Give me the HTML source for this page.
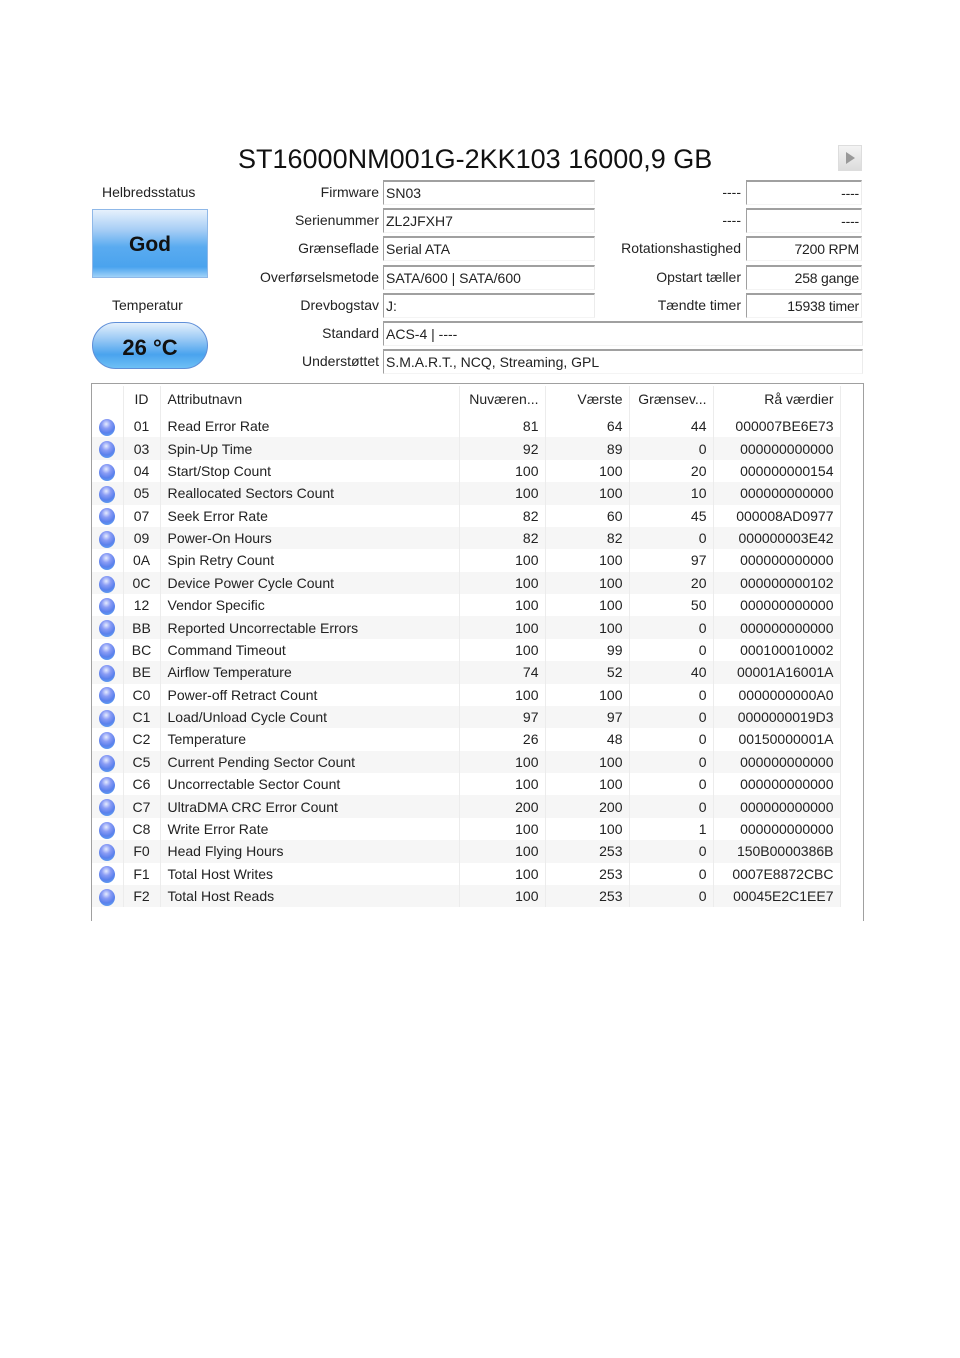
<!DOCTYPE html>
<html><head><meta charset="utf-8"><style>
body{margin:0;width:960px;height:1358px;background:#fff;font-family:"Liberation Sans",sans-serif;color:#222;position:relative;overflow:hidden}
.a{position:absolute;white-space:nowrap}
.lbl{position:absolute;font-size:14px;text-align:right;line-height:20px}
.fld{position:absolute;border-top:2px solid #a0a0a0;border-left:1px solid #a0a0a0;border-right:1px solid #ececec;border-bottom:1px solid #f4f4f4;font-size:14px;line-height:22px;padding-left:2px;box-sizing:border-box;height:25px;overflow:hidden;white-space:nowrap}
.r{text-align:right;padding-right:2px;padding-left:0;letter-spacing:-0.2px}
table{position:absolute;left:92px;top:386px;border-collapse:collapse;table-layout:fixed;font-size:14px}
td{height:22.38px;padding:0;line-height:22px;border-right:1px solid #ececec;white-space:nowrap;overflow:hidden}
tr.h td{height:28px;line-height:24px;vertical-align:top;padding-top:1px}
tr.s td{background:#f6f6f6}
td.n{text-align:right;padding-right:6px}
td.i{text-align:center}
td.m{padding-left:7px}
.dot{display:inline-block;width:16px;height:17px;border-radius:50%;background:radial-gradient(circle at 45% 30%,#e6ecff 0,#8a9cf5 30%,#5a80ec 60%,#5fb4f4 100%);vertical-align:middle}
</style></head><body>
<div class="a" style="left:238px;top:144px;font-size:27px;color:#111">ST16000NM001G-2KK103 16000,9 GB</div>
<div class="a" style="left:838px;top:145px;width:22px;height:24px;background:linear-gradient(#f4f4f4,#dcdcdc);border:1px solid #ddd"><div style="position:absolute;left:7px;top:6px;border-left:9px solid #999;border-top:6px solid transparent;border-bottom:6px solid transparent"></div></div>

<div class="a" style="left:102px;top:184px;font-size:14px">Helbredsstatus</div>
<div class="a" style="left:92px;top:209px;width:116px;height:69px;border:1px solid #8fb8e8;box-sizing:border-box;background:linear-gradient(#e6f1fc 0%,#a6cdf5 30%,#5aabf0 55%,#4aa3ee 85%,#9fd2f8 100%);text-align:center;font-size:21px;font-weight:bold;line-height:70px;color:#111">God</div>
<div class="a" style="left:112px;top:297px;font-size:14px">Temperatur</div>
<div class="a" style="left:92px;top:322px;width:116px;height:47px;border:1px solid #5f8fd8;box-sizing:border-box;border-radius:24px;background:linear-gradient(#e4f0fc 0%,#9ccaf5 35%,#4aa3ee 70%,#6ec0f5 100%);text-align:center;font-size:22px;font-weight:bold;line-height:49px;color:#111">26 °C</div>

<div class="lbl" style="right:581px;top:182px">Firmware</div>
<div class="lbl" style="right:581px;top:210px">Serienummer</div>
<div class="lbl" style="right:581px;top:238px">Grænseflade</div>
<div class="lbl" style="right:581px;top:267px">Overførselsmetode</div>
<div class="lbl" style="right:581px;top:295px">Drevbogstav</div>
<div class="lbl" style="right:581px;top:323px">Standard</div>
<div class="lbl" style="right:581px;top:351px">Understøttet</div>
<div class="fld" style="left:383px;top:180px;width:212px">SN03</div>
<div class="fld" style="left:383px;top:208px;width:212px">ZL2JFXH7</div>
<div class="fld" style="left:383px;top:236px;width:212px">Serial ATA</div>
<div class="fld" style="left:383px;top:265px;width:212px">SATA/600 | SATA/600</div>
<div class="fld" style="left:383px;top:293px;width:212px">J:</div>
<div class="fld" style="left:383px;top:321px;width:480px">ACS-4 | ----</div>
<div class="fld" style="left:383px;top:349px;width:480px">S.M.A.R.T., NCQ, Streaming, GPL</div>

<div class="lbl" style="right:219px;top:182px">----</div>
<div class="lbl" style="right:219px;top:210px">----</div>
<div class="lbl" style="right:219px;top:238px">Rotationshastighed</div>
<div class="lbl" style="right:219px;top:267px">Opstart tæller</div>
<div class="lbl" style="right:219px;top:295px">Tændte timer</div>
<div class="fld r" style="left:746px;top:180px;width:116px">----</div>
<div class="fld r" style="left:746px;top:208px;width:116px">----</div>
<div class="fld r" style="left:746px;top:236px;width:116px">7200 RPM</div>
<div class="fld r" style="left:746px;top:265px;width:116px">258 gange</div>
<div class="fld r" style="left:746px;top:293px;width:116px">15938 timer</div>

<div class="a" style="left:91px;top:383px;width:771px;height:537px;border:1px solid #a0a0a0;border-bottom:none"></div>
<table>
<colgroup><col style="width:31px"><col style="width:37px"><col style="width:299px"><col style="width:86px"><col style="width:84px"><col style="width:84px"><col style="width:127px"></colgroup>
<tr class="h"><td></td><td class="i">ID</td><td class="m">Attributnavn</td><td class="n">Nuværen...</td><td class="n">Værste</td><td class="n">Grænsev...</td><td class="n">Rå værdier</td></tr>
<tr><td class="i"><span class="dot"></span></td><td class="i">01</td><td class="m">Read Error Rate</td><td class="n">81</td><td class="n">64</td><td class="n">44</td><td class="n">000007BE6E73</td></tr>
<tr class="s"><td class="i"><span class="dot"></span></td><td class="i">03</td><td class="m">Spin-Up Time</td><td class="n">92</td><td class="n">89</td><td class="n">0</td><td class="n">000000000000</td></tr>
<tr><td class="i"><span class="dot"></span></td><td class="i">04</td><td class="m">Start/Stop Count</td><td class="n">100</td><td class="n">100</td><td class="n">20</td><td class="n">000000000154</td></tr>
<tr class="s"><td class="i"><span class="dot"></span></td><td class="i">05</td><td class="m">Reallocated Sectors Count</td><td class="n">100</td><td class="n">100</td><td class="n">10</td><td class="n">000000000000</td></tr>
<tr><td class="i"><span class="dot"></span></td><td class="i">07</td><td class="m">Seek Error Rate</td><td class="n">82</td><td class="n">60</td><td class="n">45</td><td class="n">000008AD0977</td></tr>
<tr class="s"><td class="i"><span class="dot"></span></td><td class="i">09</td><td class="m">Power-On Hours</td><td class="n">82</td><td class="n">82</td><td class="n">0</td><td class="n">000000003E42</td></tr>
<tr><td class="i"><span class="dot"></span></td><td class="i">0A</td><td class="m">Spin Retry Count</td><td class="n">100</td><td class="n">100</td><td class="n">97</td><td class="n">000000000000</td></tr>
<tr class="s"><td class="i"><span class="dot"></span></td><td class="i">0C</td><td class="m">Device Power Cycle Count</td><td class="n">100</td><td class="n">100</td><td class="n">20</td><td class="n">000000000102</td></tr>
<tr><td class="i"><span class="dot"></span></td><td class="i">12</td><td class="m">Vendor Specific</td><td class="n">100</td><td class="n">100</td><td class="n">50</td><td class="n">000000000000</td></tr>
<tr class="s"><td class="i"><span class="dot"></span></td><td class="i">BB</td><td class="m">Reported Uncorrectable Errors</td><td class="n">100</td><td class="n">100</td><td class="n">0</td><td class="n">000000000000</td></tr>
<tr><td class="i"><span class="dot"></span></td><td class="i">BC</td><td class="m">Command Timeout</td><td class="n">100</td><td class="n">99</td><td class="n">0</td><td class="n">000100010002</td></tr>
<tr class="s"><td class="i"><span class="dot"></span></td><td class="i">BE</td><td class="m">Airflow Temperature</td><td class="n">74</td><td class="n">52</td><td class="n">40</td><td class="n">00001A16001A</td></tr>
<tr><td class="i"><span class="dot"></span></td><td class="i">C0</td><td class="m">Power-off Retract Count</td><td class="n">100</td><td class="n">100</td><td class="n">0</td><td class="n">0000000000A0</td></tr>
<tr class="s"><td class="i"><span class="dot"></span></td><td class="i">C1</td><td class="m">Load/Unload Cycle Count</td><td class="n">97</td><td class="n">97</td><td class="n">0</td><td class="n">0000000019D3</td></tr>
<tr><td class="i"><span class="dot"></span></td><td class="i">C2</td><td class="m">Temperature</td><td class="n">26</td><td class="n">48</td><td class="n">0</td><td class="n">00150000001A</td></tr>
<tr class="s"><td class="i"><span class="dot"></span></td><td class="i">C5</td><td class="m">Current Pending Sector Count</td><td class="n">100</td><td class="n">100</td><td class="n">0</td><td class="n">000000000000</td></tr>
<tr><td class="i"><span class="dot"></span></td><td class="i">C6</td><td class="m">Uncorrectable Sector Count</td><td class="n">100</td><td class="n">100</td><td class="n">0</td><td class="n">000000000000</td></tr>
<tr class="s"><td class="i"><span class="dot"></span></td><td class="i">C7</td><td class="m">UltraDMA CRC Error Count</td><td class="n">200</td><td class="n">200</td><td class="n">0</td><td class="n">000000000000</td></tr>
<tr><td class="i"><span class="dot"></span></td><td class="i">C8</td><td class="m">Write Error Rate</td><td class="n">100</td><td class="n">100</td><td class="n">1</td><td class="n">000000000000</td></tr>
<tr class="s"><td class="i"><span class="dot"></span></td><td class="i">F0</td><td class="m">Head Flying Hours</td><td class="n">100</td><td class="n">253</td><td class="n">0</td><td class="n">150B0000386B</td></tr>
<tr><td class="i"><span class="dot"></span></td><td class="i">F1</td><td class="m">Total Host Writes</td><td class="n">100</td><td class="n">253</td><td class="n">0</td><td class="n">0007E8872CBC</td></tr>
<tr class="s"><td class="i"><span class="dot"></span></td><td class="i">F2</td><td class="m">Total Host Reads</td><td class="n">100</td><td class="n">253</td><td class="n">0</td><td class="n">00045E2C1EE7</td></tr>
</table>
</body></html>
